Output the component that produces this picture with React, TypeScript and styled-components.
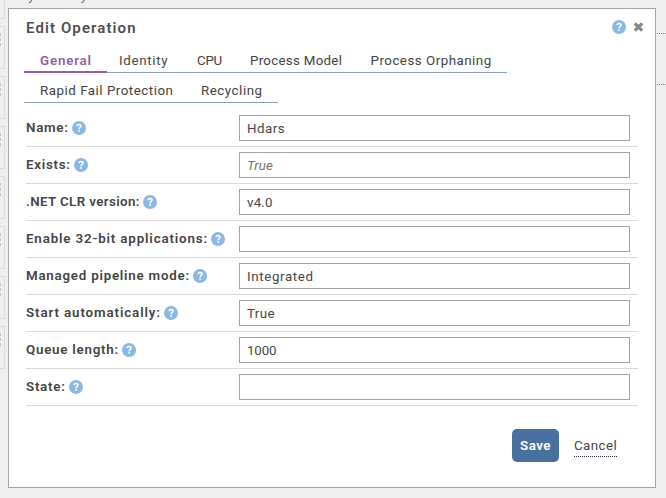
import React from "react";
import styled, { createGlobalStyle, css } from "styled-components";

const GlobalStyle = createGlobalStyle`
  * { box-sizing: border-box; }
  body {
    margin: 0;
    overflow: hidden;
    background: #efefef;
    color: #444;
    font: 13.33px/16px Roboto, "Liberation Sans", sans-serif;
  }
`;

const Page = styled.main`
  position: relative;
  width: 666px;
  height: 498px;
  overflow: hidden;
  background: #efefef;
`;

const Backdrop = styled.div`
  display: flex;
  justify-content: space-between;
  height: 100%;
`;

const CardColumn = styled.div`
  display: flex;
  flex-direction: column;
  gap: 7px;
  width: 5px;
  margin-top: -24px;
`;

const BackCard = styled.div`
  display: flex;
  flex-direction: column;
  gap: 2px;
  height: 43px;
  flex: none;
  padding-top: 6px;
  border: 1px solid #dcdcdc;
  border-left: 0;
`;

const Grip = styled.i`
  width: 1px;
  height: 3px;
  background: #c3c9c6;
`;

const BackHeading = styled.div`
  flex: 1;
  margin: -12px 0 0 11px;
  letter-spacing: 0.6px;
  color: #666;
`;

const LinkTails = styled.div`
  display: flex;
  flex-direction: column;
  gap: 50px;
  width: 9px;
  padding-top: 33px;
`;

const LinkTail = styled.div`
  border-top: 1px dotted #8278a0;
`;

const Dialog = styled.section`
  position: absolute;
  left: 8px;
  top: 8px;
  display: flex;
  flex-direction: column;
  width: 648px;
  height: 480px;
  border: 1px solid #a3a3a3;
  background: #fff;
`;

const Header = styled.header`
  display: flex;
  justify-content: space-between;
  height: 37px;
  padding: 10px 11px 0 17px;
`;

const Spaced = styled.span<{ $ls: number }>`
  letter-spacing: ${(p) => p.$ls}px;
  white-space: nowrap;
`;

const Title = styled.h1`
  margin: 0;
  font-size: 15px;
  font-weight: 600;
  line-height: 18px;
  color: #505050;
`;

const HeaderActions = styled.div`
  display: flex;
  align-items: center;
  gap: 7px;
  height: 16px;
`;

const Icon = styled.svg`
  display: block;
  flex: none;
`;

const TabRow = styled.nav`
  display: flex;
  height: 30px;
  padding-left: 15px;
`;

const Tab = styled.a<{ $width: number; $indent: number; $active?: boolean }>`
  width: ${(p) => p.$width}px;
  height: 27px;
  padding: 7px 0 0 ${(p) => p.$indent}px;
  border-bottom: 1px solid #8ba0b3;
  ${(p) =>
    p.$active &&
    css`
      border-bottom: 2px solid #935fa7;
      color: #935fa7;
      font-weight: 600;
    `}
`;

const Form = styled.div`
  margin: 4px 17px 0;
`;

const Row = styled.div`
  display: grid;
  grid-template-columns: 213px 391px;
  height: 37px;
  border-bottom: 1px solid #dadada;
`;

const Label = styled.label`
  display: flex;
  gap: 3px;
  padding-top: 10px;
  font-weight: 600;
`;

const HelpSlot = styled.span`
  padding-top: 1px;
`;

const Field = styled.div<{ $muted?: boolean }>`
  height: 26px;
  margin-top: 5px;
  padding: 5px 7px 0;
  border: 1px solid #a3a3a3;
  color: ${(p) => (p.$muted ? "#757575" : "#484848")};
  font-style: ${(p) => (p.$muted ? "italic" : "normal")};
`;

const Footer = styled.footer`
  display: flex;
  justify-content: flex-end;
  gap: 15px;
  padding: 23px 38px 0 0;
`;

const SaveButton = styled.button`
  width: 47px;
  height: 33px;
  padding: 0 0 0 8px;
  border: 0;
  border-radius: 5px;
  background: #48719f;
  color: #fff;
  font: 600 13.33px/33px Roboto, sans-serif;
  text-align: left;
`;

const CancelLink = styled.a`
  width: 43px;
  height: 28px;
  padding-top: 9px;
  border-bottom: 1px dotted #332c40;
  line-height: 16px;
`;

function HelpIcon() {
  return (
    <Icon width="14" height="14" viewBox="0 0 14 14" aria-label="Help">
      <circle cx="7" cy="7" r="7" fill="#8ab9e6" />
      <path
        d="M5 5.2C5.2 3.9 6 3.5 7 3.5c1.2 0 2 .6 2 1.6C9 6.4 7.1 6.3 7.1 8.2M7.1 9.1v1.6"
        fill="none"
        stroke="#fff"
        strokeWidth="1.6"
      />
    </Icon>
  );
}

function CloseIcon() {
  return (
    <Icon width="11" height="10" viewBox="0 0 11 10" aria-label="Close">
      <path d="M1.8 1.3 9.2 8.7M9.2 1.3 1.8 8.7" stroke="#88887f" strokeWidth="3.1" />
    </Icon>
  );
}

type TabInfo = { text: string; ls: number; width: number; indent: number; active?: boolean };

const tabRows: TabInfo[][] = [
  [
    { text: "General", ls: 0.82, width: 83, indent: 16, active: true },
    { text: "Identity", ls: 0.67, width: 77, indent: 12 },
    { text: "CPU", ls: -0.3, width: 52, indent: 13 },
    { text: "Process Model", ls: 0.28, width: 121, indent: 14 },
    { text: "Process Orphaning", ls: 0.5, width: 150, indent: 13.5 },
  ],
  [
    { text: "Rapid Fail Protection", ls: 0.52, width: 163, indent: 16 },
    { text: "Recycling", ls: 0.53, width: 91, indent: 14 },
  ],
];

type RowInfo = { label: string; ls: number; value?: string; valueLs?: number; muted?: boolean };

const rows: RowInfo[] = [
  { label: "Name:", ls: 0.72, value: "Hdars", valueLs: 0.46 },
  { label: "Exists:", ls: 0.72, value: "True", valueLs: 0.1, muted: true },
  { label: ".NET CLR version:", ls: 0.39, value: "v4.0", valueLs: 0.18 },
  { label: "Enable 32-bit applications:", ls: 0.85 },
  { label: "Managed pipeline mode:", ls: 0.77, value: "Integrated", valueLs: 0.63 },
  { label: "Start automatically:", ls: 0.89, value: "True", valueLs: 0.37 },
  { label: "Queue length:", ls: 0.76, value: "1000", valueLs: -0.15 },
  { label: "State:", ls: 0.75 },
];

export default function App() {
  return (
    <Page>
      <GlobalStyle />
      <Backdrop>
        <CardColumn>
          {Array.from({ length: 8 }, (_, i) => (
            <BackCard key={i}>
              <Grip />
              <Grip />
              <Grip />
            </BackCard>
          ))}
        </CardColumn>
        <BackHeading>My Identity</BackHeading>
        <LinkTails>
          <LinkTail />
          <LinkTail />
        </LinkTails>
      </Backdrop>
      <Dialog>
        <Header>
          <Title>
            <Spaced $ls={1.1}>Edit Operation</Spaced>
          </Title>
          <HeaderActions>
            <HelpIcon />
            <CloseIcon />
          </HeaderActions>
        </Header>
        {tabRows.map((tabs, i) => (
          <TabRow key={i}>
            {tabs.map((t) => (
              <Tab key={t.text} $width={t.width} $indent={t.indent} $active={t.active}>
                <Spaced $ls={t.ls}>{t.text}</Spaced>
              </Tab>
            ))}
          </TabRow>
        ))}
        <Form>
          {rows.map((r) => (
            <Row key={r.label}>
              <Label>
                <Spaced $ls={r.ls}>{r.label}</Spaced>
                <HelpSlot>
                  <HelpIcon />
                </HelpSlot>
              </Label>
              <Field $muted={r.muted}>
                <Spaced $ls={r.valueLs ?? 0}>{r.value}</Spaced>
              </Field>
            </Row>
          ))}
        </Form>
        <Footer>
          <SaveButton>
            <Spaced $ls={0.5}>Save</Spaced>
          </SaveButton>
          <CancelLink>
            <Spaced $ls={0.42}>Cancel</Spaced>
          </CancelLink>
        </Footer>
      </Dialog>
    </Page>
  );
}
